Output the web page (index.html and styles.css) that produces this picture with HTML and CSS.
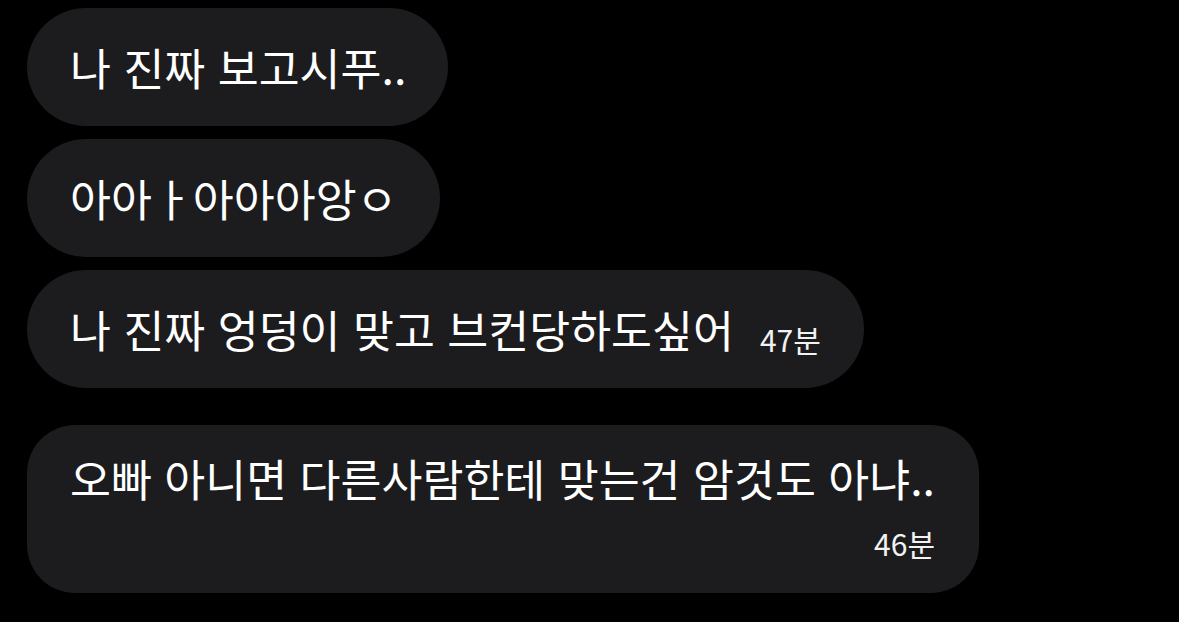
FILE: index.html
```html
<!DOCTYPE html>
<html lang="ko">
<head>
<meta charset="utf-8">
<link rel="stylesheet" href="styles.css">
</head>
<body>
<div class="chat">
  <div class="bubble">나 진짜 보고시푸..</div>
  <div class="bubble">아아ㅏ아아아앙ㅇ</div>
  <div class="bubble row">
    <span class="msg">나 진짜 엉덩이 맞고 브컨당하도싶어</span>
    <span class="time">47분</span>
  </div>
  <div class="bubble col">
    <span class="msg">오빠 아니면 다른사람한테 맞는건 암것도 아냐..</span>
    <span class="time">46분</span>
  </div>
</div>
</body>
</html>
```

FILE: styles.css
```css
html, body {
  margin: 0;
  padding: 0;
  background: #000;
}
body {
  font-family: "Noto Sans CJK KR", "Noto Sans", sans-serif;
  color: #fff;
}
.chat {
  display: flex;
  flex-direction: column;
  align-items: flex-start;
  gap: 13px;
  padding: 8px 0 0 27px;
}
.bubble {
  background: #1c1c1e;
  border-radius: 59px;
  height: 118px;
  box-sizing: border-box;
  padding: 0 42px 0 43px;
  display: flex;
  align-items: center;
  font-size: 44.5px;
  line-height: 60px;
  white-space: nowrap;
}
.bubble.row {
  align-items: center;
  gap: 26px;
  padding-right: 43px;
}
.bubble.row .time {
  margin-top: 20px;
}
.time {
  font-size: 30px;
  line-height: 36px;
  color: #f2f2f2;
}
.bubble.col {
  margin-top: 24px;
  height: 168px;
  border-radius: 48px;
  flex-direction: column;
  align-items: stretch;
  justify-content: flex-start;
  padding: 23px 44px 0 43px;
}
.bubble.col .time {
  align-self: flex-end;
  margin-top: 17px;
}
```
